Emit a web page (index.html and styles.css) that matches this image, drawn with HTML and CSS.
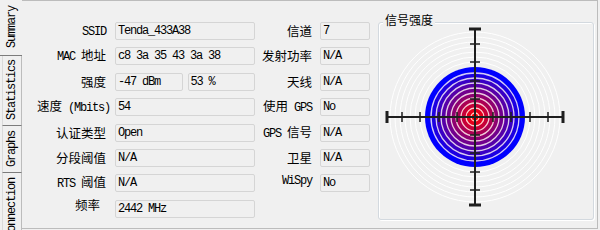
FILE: index.html
```html
<!DOCTYPE html>
<html lang="zh-CN">
<head>
<meta charset="utf-8">
<title>Summary</title>
<link rel="stylesheet" href="styles.css">
</head>
<body>
<div class="window">
  <nav class="tabs">
    <div class="tab tab-summary is-active"><span class="tab-text">Summary</span></div>
    <div class="tab tab-statistics"><span class="tab-text">Statistics</span></div>
    <div class="tab tab-graphs"><span class="tab-text">Graphs</span></div>
    <div class="tab tab-connection"><span class="tab-text">Connection</span></div>
  </nav>
  <main class="page">
    <div class="form">
      <div class="lbl"><span class="lat">SSID</span></div>
      <div class="field">Tenda_433A38</div>
      <div class="lbl lbl-mid">信道</div>
      <div class="field">7</div>

      <div class="lbl"><span class="lat">MAC </span>地址</div>
      <div class="field">c8 3a 35 43 3a 38</div>
      <div class="lbl lbl-mid">发射功率</div>
      <div class="field">N/A</div>

      <div class="lbl">强度</div>
      <div class="field-pair">
        <div class="field">-47 dBm</div>
        <div class="field">53 %</div>
      </div>
      <div class="lbl lbl-mid">天线</div>
      <div class="field">N/A</div>

      <div class="lbl lbl-wide">速度<span class="lat"> (Mbits)</span></div>
      <div class="field">54</div>
      <div class="lbl lbl-mid">使用<span class="lat"> GPS</span></div>
      <div class="field">No</div>

      <div class="lbl">认证类型</div>
      <div class="field">Open</div>
      <div class="lbl lbl-mid"><span class="lat">GPS </span>信号</div>
      <div class="field">N/A</div>

      <div class="lbl">分段阈值</div>
      <div class="field">N/A</div>
      <div class="lbl lbl-mid">卫星</div>
      <div class="field">N/A</div>

      <div class="lbl"><span class="lat">RTS </span>阈值</div>
      <div class="field">N/A</div>
      <div class="lbl lbl-mid lbl-raise-3"><span class="lat">WiSpy</span></div>
      <div class="field">No</div>

      <div class="lbl lbl-short lbl-raise-4">频率</div>
      <div class="field">2442 MHz</div>

      <section class="group">
        <h2 class="group-title">信号强度</h2>
        <svg class="target" viewBox="0 0 214 196" width="214" height="196">
          <g transform="translate(96 94)">
            <g class="rings-bg" fill="none" stroke="#ffffff" stroke-width="1">
              <circle r="55"/><circle r="60"/><circle r="65"/><circle r="70"/>
              <circle r="75"/><circle r="80"/><circle r="85"/>
            </g>
            <g class="bands">
              <circle r="50" fill="#0000ff"/>
              <circle r="45" fill="#1c00e3"/>
              <circle r="40" fill="#3900c6"/>
              <circle r="35" fill="#5500aa"/>
              <circle r="30" fill="#71008e"/>
              <circle r="25" fill="#8e0071"/>
              <circle r="20" fill="#aa0055"/>
              <circle r="15" fill="#c60039"/>
              <circle r="10" fill="#e3001c"/>
              <circle r="5" fill="#ff0000"/>
            </g>
            <g class="rings-fg" fill="none" stroke="#ffffff" stroke-width="1.3" stroke-opacity="0.8">
              <circle r="4"/><circle r="9"/><circle r="14"/><circle r="19"/><circle r="24"/>
              <circle r="29"/><circle r="34"/><circle r="39"/><circle r="44"/>
            </g>
            <g class="axes" stroke="#1e1e1e" fill="none">
              <path d="M-88 0H88M0 -88V88" stroke-width="2"/>
              <path d="M-73 -5V5M-55 -5V5M-36 -5V5M-18 -5V5M18 -5V5M36 -5V5M55 -5V5M73 -5V5M-5 -73H5M-5 -55H5M-5 -36H5M-5 -18H5M-5 18H5M-5 36H5M-5 55H5M-5 73H5" stroke-width="1.5"/>
              <path d="M-88 -6V6M88 -6V6M-6 -88H6M-6 88H6" stroke-width="3"/>
            </g>
          </g>
        </svg>
      </section>
    </div>
  </main>
</div>
</body>
</html>
```
FILE: styles.css
```css
html, body {
  margin: 0;
  padding: 0;
}

body {
  width: 600px;
  height: 230px;
  overflow: hidden;
  background: #f0f0f0;
  color: #000;
  font-family: "Noto Sans CJK SC", "Liberation Sans", sans-serif;
}

.window {
  display: flex;
  height: 230px;
  overflow: hidden;
}

/* ---- vertical tabs ---- */
.tabs {
  flex: none;
  width: 22px;
  display: flex;
  flex-direction: column;
}

.tab {
  flex: none;
  box-sizing: border-box;
  display: flex;
  align-items: center;
  justify-content: center;
  margin-left: 2px;
  border-left: 1px solid #dadada;
  border-right: 1px solid #bcbcbc;
  border-bottom: 1px solid #7c7c7c;
}

.tab.is-active {
  margin-left: 0;
  border-left: 0;
  border-right: 0;
  padding-left: 2px;
}

.tab-summary { height: 56px; }
.tab-statistics { height: 70px; }
.tab-graphs { height: 47px; }
.tab-connection { height: 70px; border-bottom: 0; }

.tab-text {
  display: inline-block;
  writing-mode: vertical-rl;
  transform: rotate(180deg);
  font-family: "Liberation Mono", monospace;
  font-size: 12px;
  line-height: 12px;
  letter-spacing: -1.2px;
}

/* ---- page ---- */
.page {
  flex: none;
  box-sizing: border-box;
  width: 576px;
  height: 229px;
  border-top: 1px solid #bcbcbc;
  border-right: 1px solid #bcbcbc;
  border-bottom: 1px solid #bcbcbc;
}

.form {
  display: grid;
  grid-template-columns: 93px 140px 65px 50px 224px;
  grid-template-rows: repeat(8, 18px);
  row-gap: 7.4px;
  padding-top: 21px;
}

.lbl {
  align-self: center;
  justify-self: end;
  padding-right: 9px;
  white-space: pre;
  font-size: 12.5px;
  line-height: 18px;
}

.lbl-mid { padding-right: 8px; }
.lbl-wide { padding-right: 5px; }
.lbl-short { padding-right: 15px; }
.lbl-raise-3 { margin-bottom: 6px; }
.lbl-raise-4 { margin-bottom: 8px; }

.lat {
  font-family: "Liberation Mono", monospace;
  font-size: 12px;
  letter-spacing: -1.2px;
  white-space: pre;
}

.field {
  box-sizing: border-box;
  height: 18px;
  border: 1px solid #d5d5d5;
  border-radius: 2px;
  padding-left: 2px;
  background: #f0f0f0;
  font-family: "Liberation Mono", monospace;
  font-size: 12px;
  letter-spacing: -1.2px;
  line-height: 16px;
  white-space: nowrap;
  overflow: hidden;
}

.field-pair {
  display: flex;
  gap: 5px;
}

.field-pair .field {
  flex: 1 1 0;
}

/* ---- group box ---- */
.group {
  grid-column: 5;
  grid-row: 1 / 9;
  position: relative;
  box-sizing: border-box;
  width: 216px;
  margin-left: 8px;
  margin-bottom: -2px;
  border: 1px solid #d3d9df;
  border-radius: 3px;
  box-shadow: 1px 1px 0 #ffffff, inset 1px 1px 0 #ffffff;
}

.group-title {
  position: absolute;
  top: -10px;
  left: 4px;
  margin: 0;
  padding: 0 2px;
  background: #f0f0f0;
  font-size: 12px;
  font-weight: normal;
  line-height: 14px;
}

.target {
  display: block;
}
```
